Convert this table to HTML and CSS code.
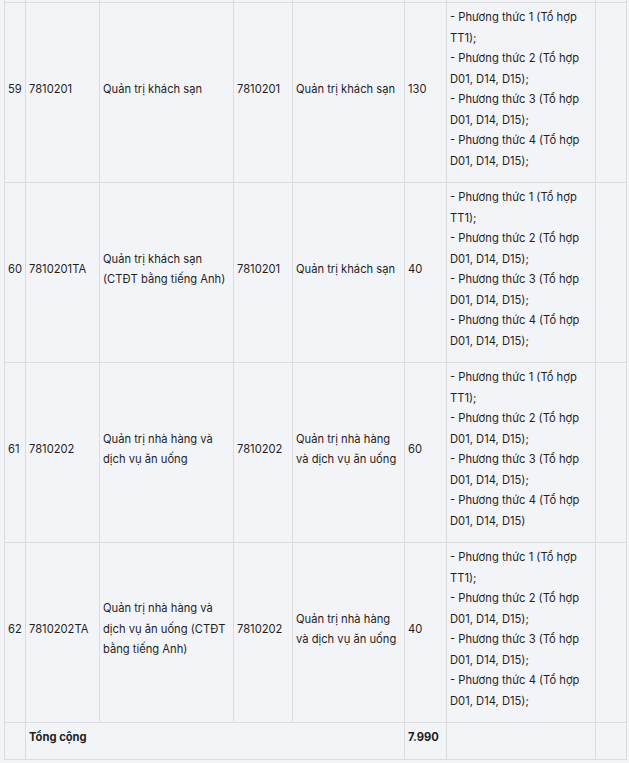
FILE: index.html
```html
<!DOCTYPE html>
<html lang="vi">
<head>
<meta charset="utf-8">
<title>Bảng chỉ tiêu</title>
<link rel="stylesheet" href="styles.css">
</head>
<body>
<div class="page">
<table class="quota">
<colgroup>
<col class="c1"><col class="c2"><col class="c3"><col class="c4"><col class="c5"><col class="c6"><col class="c7"><col class="c8">
</colgroup>
<tbody>
<tr class="prev"><td></td><td></td><td></td><td></td><td></td><td></td><td></td><td></td></tr>
<tr>
<td>59</td><td>7810201</td><td>Quản trị khách sạn</td><td>7810201</td><td>Quản trị khách sạn</td><td>130</td>
<td><p>- Phương thức 1 (Tổ hợp TT1);</p><p>- Phương thức 2 (Tổ hợp D01, D14, D15);</p><p>- Phương thức 3 (Tổ hợp D01, D14, D15);</p><p>- Phương thức 4 (Tổ hợp D01, D14, D15);</p></td><td></td>
</tr>
<tr>
<td>60</td><td>7810201TA</td><td>Quản trị khách sạn (CTĐT bằng tiếng Anh)</td><td>7810201</td><td>Quản trị khách sạn</td><td>40</td>
<td><p>- Phương thức 1 (Tổ hợp TT1);</p><p>- Phương thức 2 (Tổ hợp D01, D14, D15);</p><p>- Phương thức 3 (Tổ hợp D01, D14, D15);</p><p>- Phương thức 4 (Tổ hợp D01, D14, D15);</p></td><td></td>
</tr>
<tr>
<td>61</td><td>7810202</td><td>Quản trị nhà hàng và dịch vụ ăn uống</td><td>7810202</td><td>Quản trị nhà hàng và dịch vụ ăn uống</td><td>60</td>
<td><p>- Phương thức 1 (Tổ hợp TT1);</p><p>- Phương thức 2 (Tổ hợp D01, D14, D15);</p><p>- Phương thức 3 (Tổ hợp D01, D14, D15);</p><p>- Phương thức 4 (Tổ hợp D01, D14, D15)</p></td><td></td>
</tr>
<tr>
<td>62</td><td>7810202TA</td><td>Quản trị nhà hàng và dịch vụ ăn uống (CTĐT bằng tiếng Anh)</td><td>7810202</td><td>Quản trị nhà hàng và dịch vụ ăn uống</td><td>40</td>
<td><p>- Phương thức 1 (Tổ hợp TT1);</p><p>- Phương thức 2 (Tổ hợp D01, D14, D15);</p><p>- Phương thức 3 (Tổ hợp D01, D14, D15);</p><p>- Phương thức 4 (Tổ hợp D01, D14, D15);</p></td><td></td>
</tr>
<tr class="total">
<td></td><td colspan="4"><strong>Tổng cộng</strong></td><td><strong>7.990</strong></td><td></td><td></td>
</tr>
</tbody>
</table>
</div>
</body>
</html>
```
FILE: styles.css
```css
html, body {
  margin: 0;
  padding: 0;
  background: #f3f4f8;
}
.page {
  padding: 0 3px 0 4px;
  font-family: Inter, "Noto Sans", sans-serif;
  font-size: 11.2px;
  line-height: 20.5px;
  color: #1f1f1f;
}
.quota {
  border-collapse: collapse;
  table-layout: fixed;
  width: 623px;
}
.c1 { width: 21px; }
.c2 { width: 74px; }
.c3 { width: 134px; }
.c4 { width: 59px; }
.c5 { width: 112px; }
.c6 { width: 42px; }
.c7 { width: 149px; }
.c8 { width: 31px; }
.quota td {
  border: 1px solid #dadce0;
  padding: 4px 3px 11px 3px;
  vertical-align: middle;
  text-align: left;
}
.quota p {
  margin: 0;
}
.quota tr.prev td {
  border-top: none;
  padding: 0;
  height: 2px;
}
.quota strong {
  font-weight: 700;
}
```
